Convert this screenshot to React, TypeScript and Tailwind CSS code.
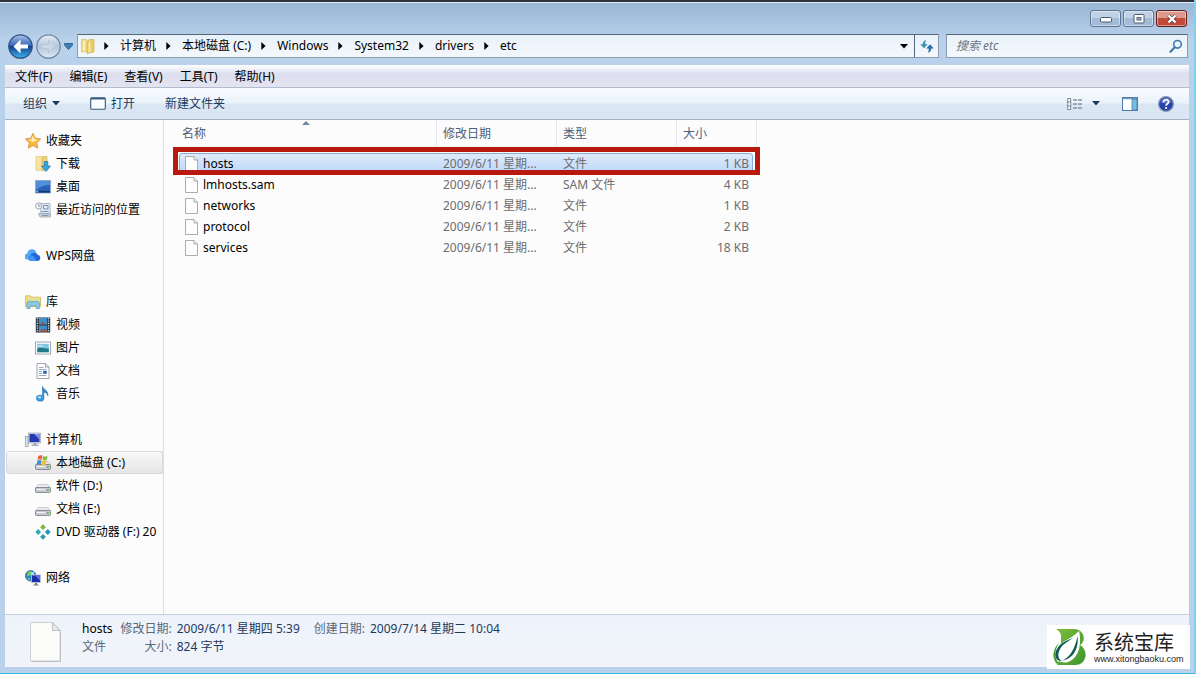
import type { ReactNode } from 'react'
import { clsx } from 'clsx'

interface FileRow {
  name: string
  date: string
  type: string
  size: string
}

interface NavItem {
  label: string
  icon: ReactNode
  active?: boolean
}

interface NavGroup extends NavItem {
  items: NavItem[]
}

const path = ['计算机', '本地磁盘 (C:)', 'Windows', 'System32', 'drivers', 'etc']

const menus = ['文件(F)', '编辑(E)', '查看(V)', '工具(T)', '帮助(H)']

const files: FileRow[] = [
  { name: 'hosts', date: '2009/6/11 星期...', type: '文件', size: '1 KB' },
  { name: 'lmhosts.sam', date: '2009/6/11 星期...', type: 'SAM 文件', size: '4 KB' },
  { name: 'networks', date: '2009/6/11 星期...', type: '文件', size: '1 KB' },
  { name: 'protocol', date: '2009/6/11 星期...', type: '文件', size: '2 KB' },
  { name: 'services', date: '2009/6/11 星期...', type: '文件', size: '18 KB' },
]

/* ---------- icons ---------- */

function Icon({ children }: { children: ReactNode }) {
  return (
    <svg viewBox="0 0 16 16" className="h-4 w-4 shrink-0" aria-hidden="true">
      {children}
    </svg>
  )
}

const StarIcon = () => (
  <Icon>
    <path
      d="M8 .3l2.300 5 5.400.6-4 3.800 1.100 5.500L8 12.400 3.200 15.200l1.100-5.500L.3 5.900l5.400-.6z"
      fill="#fbb83c"
      stroke="#d98a34"
      strokeWidth=".8"
      strokeLinejoin="round"
    />
    <path d="M8 2.500l1.500 3.700 3.800.5-5.300 2.300-4.800-2.300 3.300-.5z" fill="#fff0b0" />
  </Icon>
)

const FolderIcon = () => (
  <Icon>
    <path d="M1.500 1.500h5l1 1v11l-6 .5z" fill="#f3dc85" stroke="#d9b95c" strokeWidth=".6" />
    <path d="M7 4l2-2.500h5v12.500L7 15.500z" fill="#e9cb62" stroke="#cfae4c" strokeWidth=".6" />
    <path d="M3 3h2v10H3z" fill="#fbf0bd" />
    <path d="M8.500 5l2-2v10.500l-2 1z" fill="#f8e9a4" />
  </Icon>
)

const DownloadIcon = () => (
  <Icon>
    <path d="M1 .5h7v13.500l-7 .5z" fill="#f6e4a0" stroke="#d9bd6a" strokeWidth=".6" />
    <path d="M7 3l1.500-2.500H12v13L7 15z" fill="#ecd07a" stroke="#cfae4c" strokeWidth=".6" />
    <path d="M9.300 5.500h3.500v4.500h2.700L11 15.500 6.600 10h2.700z" fill="#38a5dc" stroke="#1f6fae" strokeWidth=".7" />
  </Icon>
)

const DesktopIcon = () => (
  <Icon>
    <rect x=".5" y="1.500" width="15" height="12.500" fill="#2a62b8" stroke="#8fa6c4" strokeWidth=".8" />
    <path d="M1 2h14v4C9 5.500 5 8 1 11z" fill="#4f8fdb" />
    <path d="M1 11.800h14v1.700H1z" fill="#16386f" />
    <circle cx="2.300" cy="12.500" r="1" fill="#6fd0f0" />
  </Icon>
)

const RecentIcon = () => (
  <Icon>
    <path d="M5 1.500h10v10H6z" fill="#e9eef4" stroke="#8f9cab" strokeWidth=".7" />
    <path d="M3.500 11.500h12V15H5z" fill="#cdd6e0" stroke="#8f9cab" strokeWidth=".7" />
    <path d="M8.500 3.500h4.500v3.500H8.500zM6.500 9.500h7M6.500 13.300h7" fill="none" stroke="#6a90b8" />
    <circle cx="3.700" cy="3.900" r="3.100" fill="#f4f6f8" stroke="#8995a3" strokeWidth=".8" />
    <path d="M3.700 2v2.200h1.700" fill="none" stroke="#66727f" strokeWidth=".7" />
  </Icon>
)

const CloudIcon = () => (
  <Icon>
    <path d="M3 11.500A3 3 0 0 1 2.300 5.500a4.700 4.700 0 0 1 9-1.500L6 12z" fill="#56a8f5" />
    <path d="M5 13a3.200 3.200 0 0 1 .3-5.600 4.200 4.200 0 0 1 7.500-.6A3.200 3.200 0 0 1 13 13z" fill="#2468dc" />
    <path d="M5 13a3.200 3.200 0 0 1 .3-5.600c2.700-.5 4.500 2 6.200 5.600z" fill="#4096f0" />
  </Icon>
)

const LibraryIcon = () => (
  <Icon>
    <path d="M.6 1.800h5l1 1.400h8.900v9.500H.6z" fill="#f1df84" stroke="#c9ad4f" strokeWidth=".7" />
    <path d="M2 5h12v3H2z" fill="#cfe3a3" />
    <path d="M2 14.500V9.500Q2 7.700 3.500 7.700h9.300q1.500 0 1.500 1.800v5h-3v-2.700H5v2.700z" fill="#8ccbe8" stroke="#4f94bc" strokeWidth=".7" />
  </Icon>
)

const VideoIcon = () => (
  <Icon>
    <rect x=".8" y=".5" width="14.400" height="15" fill="#27323e" />
    <rect x="4" y="1" width="8" height="6.500" fill="#3f8fcd" />
    <rect x="4" y="8.500" width="8" height="6.500" fill="#3f8fcd" />
    <path d="M6 7.500l1-3 2 1 1 2zM5 15l2-3 2 1 1.500-2 1.500 4z" fill="#a14f3e" />
    <path d="M2.500 1v14M13.500 1v14" stroke="#dfe6ec" strokeWidth="1.400" strokeDasharray="1.200 1.200" />
  </Icon>
)

const PictureIcon = () => (
  <Icon>
    <rect x=".5" y="2" width="15" height="12" fill="#fff" stroke="#8794a3" strokeWidth=".8" />
    <rect x="2.200" y="3.800" width="11.600" height="8.400" fill="#7fc4e2" />
    <path d="M2.200 9c3-2.500 5 0 11.600-.5v3.700H2.200z" fill="#1f7c85" />
    <path d="M3 6h5" stroke="#eaf6fb" />
  </Icon>
)

const DocumentIcon = () => (
  <Icon>
    <path d="M2 .5h8.500L14 4v11.500H2z" fill="#fdfdfd" stroke="#8b8f96" strokeWidth=".8" />
    <path d="M10.500.5V4H14" fill="#dfe3e8" stroke="#8b8f96" strokeWidth=".8" />
    <path d="M4 4.500h4.500M4 6.500h7.500M4 8.500h3M4 10.500h3M4 12.500h7.500" stroke="#7f9cc0" strokeWidth=".8" />
    <rect x="8.200" y="7.800" width="3.500" height="3" fill="#2f62a8" />
  </Icon>
)

const MusicIcon = () => (
  <Icon>
    <path d="M7.500.3c.5 3.200 6.300 4 5.300 9.700-.4-2.500-2-3.500-4-3.800V12H7.500z" fill="#2f86cc" stroke="#1f68ab" strokeWidth=".5" />
    <ellipse cx="5.200" cy="12.200" rx="3.900" ry="3.100" fill="#3c9cdf" stroke="#2370b2" strokeWidth=".5" />
    <ellipse cx="4.500" cy="11.300" rx="1.800" ry="1.100" fill="#b9e1f7" />
  </Icon>
)

const ComputerIcon = () => (
  <Icon>
    <rect x=".5" y="4.500" width="2.600" height="10" fill="#dfe4ea" stroke="#8b95a1" strokeWidth=".7" />
    <rect x="3.500" y="1" width="12" height="10" fill="#d5dbe3" stroke="#8b95a1" strokeWidth=".6" />
    <rect x="4.500" y="2" width="10" height="8" fill="#2338b4" />
    <path d="M9 2h5.500v5.500z" fill="#7d93ea" />
    <path d="M8.500 11h3v1.500h2V14h-7v-1.500h2z" fill="#a4adb8" />
  </Icon>
)

const Drive = () => (
  <>
    <path d="M3 6.500h10l2.500 3.500H.5z" fill="#e9ebee" stroke="#a6abb2" strokeWidth=".5" />
    <rect x=".5" y="9.500" width="15" height="5" rx="1" fill="#c6cad0" stroke="#73787f" strokeWidth=".8" />
    <path d="M2 11.500h8" stroke="#f4f5f6" />
    <rect x="12" y="11" width="1.700" height="2" fill="#58b947" />
  </>
)

const DriveIcon = () => (
  <Icon>
    <Drive />
  </Icon>
)

const SystemDriveIcon = () => (
  <Icon>
    <Drive />
    <path d="M3.300 1Q5.500-.5 7.500.6l-.8 4.100q-2-1-4.200.3z" fill="#e8603c" />
    <path d="M8.200.9q2.200 1 4.400 0l-.8 4.100q-2.200 1-4.300 0z" fill="#86bd3d" />
    <path d="M2.300 5.700q2.200-1.300 4.200-.3L5.800 9.400q-2-1-4.200.3z" fill="#3f8fdc" />
    <path d="M7.200 5.700q2.200 1 4.300 0l-.8 4q-2.200 1-4.200 0z" fill="#f5c02f" />
  </Icon>
)

const DvdIcon = () => (
  <Icon>
    <path d="M8 .3l2.900 2.900L8 6.100 5.100 3.200z" fill="#7fb93a" />
    <path d="M3.200 5.100L6.100 8l-2.900 2.900L.3 8z" fill="#2aa7b8" />
    <path d="M12.800 5.100L15.700 8l-2.900 2.900L9.900 8z" fill="#2596c4" />
    <path d="M8 9.900l2.900 2.900L8 15.700l-2.900-2.900z" fill="#2a9ab0" />
  </Icon>
)

const NetworkIcon = () => (
  <Icon>
    <circle cx="5.700" cy="5.800" r="5.300" fill="#2c83bd" stroke="#1d5c92" strokeWidth=".6" />
    <path d="M3 2.200q3-2 4.200 0L5 5.500 1.800 6.500zM1.800 8l3.200 0v2.500z" fill="#7fd060" />
    <path d="M6 2.800l3-1v3H6z" fill="#bfe6f5" />
    <rect x="6.500" y="5" width="9" height="7.500" fill="#1c2fa8" stroke="#bdc6d2" strokeWidth=".9" />
    <path d="M10 5.500h5v5z" fill="#5b76e0" />
    <path d="M10 13h2v1.500h1.500v1h-5v-1H10z" fill="#6d7782" />
  </Icon>
)

const Caret = ({ className }: { className?: string }) => (
  <svg viewBox="0 0 8 5" className={clsx('h-[5px] w-2 shrink-0', className)} aria-hidden="true">
    <path d="M0 0h8L4 4.600z" fill="currentColor" />
  </svg>
)

const Chevron = () => (
  <svg viewBox="0 0 5 8" className="h-2 w-[5px] shrink-0 text-black" aria-hidden="true">
    <path d="M.3 0v8L4.600 4z" fill="currentColor" />
  </svg>
)

const BlankFile = () => (
  <svg viewBox="0 0 13 16" className="h-4 w-[13px]" aria-hidden="true">
    <path d="M.5.5h8.500L12.500 4v11.500H.5z" fill="#fdfdfd" stroke="#a3a3a3" strokeWidth=".9" />
    <path d="M9 .5V4h3.500" fill="#eee" stroke="#a3a3a3" strokeWidth=".9" />
  </svg>
)

const LargeFile = () => (
  <svg viewBox="0 0 32 41" className="h-[41px] w-8 shrink-0" aria-hidden="true">
    <path d="M1.500 2h22.500l7 8v30H1.500z" fill="#b9bcc2" />
    <path d="M.5.5h22L30 8.500v30.500H.5z" fill="#fbfbfa" stroke="#c6c6c6" strokeWidth=".8" />
    <path d="M22.500.5v8H30z" fill="#e9e9e9" stroke="#b3b3b3" strokeWidth=".8" />
  </svg>
)

const groups: NavGroup[] = [
  {
    label: '收藏夹',
    icon: <StarIcon />,
    items: [
      { label: '下载', icon: <DownloadIcon /> },
      { label: '桌面', icon: <DesktopIcon /> },
      { label: '最近访问的位置', icon: <RecentIcon /> },
    ],
  },
  { label: 'WPS网盘', icon: <CloudIcon />, items: [] },
  {
    label: '库',
    icon: <LibraryIcon />,
    items: [
      { label: '视频', icon: <VideoIcon /> },
      { label: '图片', icon: <PictureIcon /> },
      { label: '文档', icon: <DocumentIcon /> },
      { label: '音乐', icon: <MusicIcon /> },
    ],
  },
  {
    label: '计算机',
    icon: <ComputerIcon />,
    items: [
      { label: '本地磁盘 (C:)', icon: <SystemDriveIcon />, active: true },
      { label: '软件 (D:)', icon: <DriveIcon /> },
      { label: '文档 (E:)', icon: <DriveIcon /> },
      { label: 'DVD 驱动器 (F:) 20', icon: <DvdIcon /> },
    ],
  },
  { label: '网络', icon: <NetworkIcon />, items: [] },
]

/* ---------- window chrome ---------- */

function TitleBar() {
  const base = 'flex h-[17px] w-[31px] items-center justify-center rounded-[3px] border shadow-[inset_0_0_0_1px_rgba(255,255,255,0.45)]'
  const plain = 'border-[#5d7491] bg-linear-to-b from-[#c0d2e6] from-50% to-[#a3bbd6] to-50%'
  return (
    <div className="flex h-[34px] items-start justify-end gap-[2px] border-t-2 border-[#2c333d] pt-2 pr-[7px] shadow-[inset_0_1px_0_#e4edf6]">
      <button aria-label="最小化" className={clsx(base, plain)}>
        <svg viewBox="0 0 12 6" className="mt-[3px] h-[6px] w-3">
          <rect x=".5" y=".5" width="11" height="4.500" rx="1" fill="#fff" stroke="#4d5b6c" />
        </svg>
      </button>
      <button aria-label="最大化" className={clsx(base, plain)}>
        <svg viewBox="0 0 12 10" className="h-[10px] w-3">
          <rect x="1" y=".5" width="10" height="8.500" rx="1" fill="#fff" stroke="#4d5b6c" />
          <rect x="4" y="3.500" width="4" height="2.500" fill="#9db6d2" stroke="#4d5b6c" strokeWidth=".9" />
        </svg>
      </button>
      <button
        aria-label="关闭"
        className={clsx(base, 'border-[#5b1f1c] bg-linear-to-b from-[#dd9a8c] from-50% to-[#c24a38] to-50%')}
      >
        <svg viewBox="0 0 12 10" className="h-[10px] w-3">
          <path d="M2.500 1.500l7 7M9.500 1.500l-7 7" stroke="#5a3a3f" strokeWidth="3.800" />
          <path d="M2.500 1.500l7 7M9.500 1.500l-7 7" stroke="#fff" strokeWidth="2.400" />
        </svg>
      </button>
    </div>
  )
}

function NavButtons() {
  return (
    <div className="flex items-center gap-[3px]">
      <button aria-label="后退" className="h-[25px] w-[25px]">
        <svg viewBox="0 0 25 25" className="h-full w-full">
          <defs>
            <linearGradient id="back" x1="0" y1="0" x2="0" y2="1">
              <stop offset="0" stopColor="#a8c4ea" />
              <stop offset=".45" stopColor="#3a6ab8" />
              <stop offset=".5" stopColor="#15408f" />
              <stop offset="1" stopColor="#3cb4ee" />
            </linearGradient>
          </defs>
          <circle cx="12.500" cy="12.500" r="11.700" fill="url(#back)" stroke="#33507c" strokeWidth="1.200" />
          <path d="M12.500 5.500l-7 7 7 7v-5h7.500v-4h-7.500z" fill="#fff" />
        </svg>
      </button>
      <button aria-label="前进" className="h-[25px] w-[25px]">
        <svg viewBox="0 0 25 25" className="h-full w-full">
          <defs>
            <linearGradient id="forward" x1="0" y1="0" x2="0" y2="1">
              <stop offset="0" stopColor="#e6edf5" />
              <stop offset=".5" stopColor="#b4c6dc" />
              <stop offset="1" stopColor="#dfe9f4" />
            </linearGradient>
          </defs>
          <circle cx="12.500" cy="12.500" r="11.700" fill="url(#forward)" stroke="#71839b" strokeWidth="1.200" />
          <path d="M12.500 6l6.700 6.500-6.700 6.500v-4.500H5.300v-4h7.200z" fill="#c9d7e7" stroke="#b3c3d6" strokeWidth=".7" />
        </svg>
      </button>
      <button aria-label="最近的页面">
        <svg viewBox="0 0 9 7" className="h-[7px] w-[9px]">
          <path d="M.5.5h8v1.500l-4 4.500-4-4.500z" fill="#3d83bb" stroke="#24517e" strokeWidth=".8" />
        </svg>
      </button>
    </div>
  )
}

function AddressRow() {
  const field = 'flex h-6 items-center border border-[#8b9cb1] border-t-[#54677c] bg-linear-to-b from-[#e9f1f9] to-[#f4f8fc]'
  return (
    <div className="flex h-[31px] items-start gap-[7px] pr-[6px] pl-2">
      <div className="-mr-[3px]">
        <NavButtons />
      </div>
      <nav aria-label="地址" className={clsx(field, 'min-w-0 flex-1 pl-[2px]')}>
        <FolderIcon />
        <ol className="flex flex-1 items-center gap-[10px] pl-2">
          {path.map((p) => (
            <li key={p} className="flex items-center gap-[11px]">
              <Chevron />
              <a href="#" className="whitespace-nowrap text-black">
                {p}
              </a>
            </li>
          ))}
        </ol>
        <button aria-label="历史记录" className="flex h-full w-5 items-center justify-center text-black">
          <Caret />
        </button>
        <button aria-label="刷新" className="flex h-full w-6 items-center justify-center border-l border-[#54677c]">
          <svg viewBox="0 0 14 14" className="h-[14px] w-[14px]">
            <path d="M6 1C4 1.500 2.800 3 2.800 5.200H.3L4 9.200l3.700-4H5.300C5.200 3.500 5.400 2 6 1z" fill="#3f92ad" />
            <path d="M8 13.800c2-.5 3.200-2 3.200-4.300h2.500L10 5.200 6.300 9.500h2.400c.1 1.500-.1 3.300-.7 4.300z" fill="#2d6ca8" />
          </svg>
        </button>
      </nav>
      <label className={clsx(field, 'w-[242px] pr-1 pl-[9px]')}>
        <input
          type="search"
          aria-label="搜索 etc"
          placeholder="搜索 etc"
          className="min-w-0 flex-1 bg-transparent italic outline-none placeholder:text-[#6d7580]"
        />
        <svg viewBox="0 0 14 14" className="h-[14px] w-[14px]" aria-hidden="true">
          <circle cx="8.500" cy="5.300" r="3.800" fill="#eef6fc" stroke="#3f78ab" strokeWidth="1.600" />
          <path d="M5.800 8.200L1.500 12.700" stroke="#3f78ab" strokeWidth="2.200" strokeLinecap="round" />
        </svg>
      </label>
    </div>
  )
}

function MenuBar() {
  return (
    <div className="flex h-[23px] items-center gap-[17px] border-b border-[#b4bccb] bg-linear-to-b from-white via-[#dcdfee] via-40% to-[#e3e4f2] px-[10px] pt-px text-black">
      {menus.map((m) => (
        <button key={m}>{m}</button>
      ))}
    </div>
  )
}

function Toolbar() {
  return (
    <div className="flex h-8 items-center border-b border-[#a2b1c6] bg-linear-to-b from-[#f8fbfe] from-0% via-[#eaf3fb] via-48% to-[#dbe6f4] to-52% pr-[15px] pl-[18px] text-[#1e395b]">
      <button className="flex items-center gap-[5px]">
        组织
        <Caret />
      </button>
      <button className="ml-[30px] flex items-center gap-[5px]">
        <svg viewBox="0 0 16 13" className="h-[13px] w-4" aria-hidden="true">
          <rect x=".7" y=".7" width="14.600" height="11.600" rx="1" fill="#fbfdff" stroke="#35577f" strokeWidth="1.100" />
          <path d="M1 1.700h14" stroke="#35577f" strokeWidth="1.500" />
        </svg>
        打开
      </button>
      <button className="ml-[30px]">新建文件夹</button>
      <div className="ml-auto flex items-center">
        <button aria-label="更改视图">
          <svg viewBox="0 0 16 12" className="h-3 w-4">
            <path d="M.7.5h3v11h-3zM.7 4h3M.7 8h3" fill="#fff" stroke="#6a7888" strokeWidth=".9" />
            <path d="M6 2h9.500M6 6h9.500M6 10h9.500" stroke="#52647a" strokeWidth="1.100" strokeDasharray="4 1" />
          </svg>
        </button>
        <button aria-label="更多选项" className="ml-[9px]">
          <Caret />
        </button>
        <button aria-label="显示预览窗格" className="ml-[22px]">
          <svg viewBox="0 0 16 14" className="h-[14px] w-4">
            <rect x=".5" y=".5" width="15" height="13" fill="#fff" stroke="#4f7ba6" />
            <path d="M1 1.500h14" stroke="#6f98be" strokeWidth="1.400" />
            <rect x="10" y="2.500" width="5" height="10.500" fill="#72bfe0" stroke="#4f7ba6" strokeWidth=".7" />
          </svg>
        </button>
        <button aria-label="获取帮助" className="ml-5">
          <svg viewBox="0 0 16 16" className="h-4 w-4">
            <circle cx="8" cy="8" r="7.400" fill="#2745a8" stroke="#8f9bb5" strokeWidth="1.200" />
            <path d="M2.500 6.500a5.600 5.600 0 0 1 11 0q-5.500 2-11 0z" fill="#6f8bdc" opacity=".7" />
            <path d="M5.600 6.200c0-3.300 5-3.200 5-.3 0 1.900-2.500 1.900-2.500 3.900" fill="none" stroke="#fff" strokeWidth="1.700" />
            <circle cx="8.100" cy="12" r="1.100" fill="#fff" />
          </svg>
        </button>
      </div>
    </div>
  )
}

/* ---------- panes ---------- */

function NavLink({ item, nested }: { item: NavItem; nested?: boolean }) {
  return (
    <a
      href="#"
      className={clsx(
        'flex h-[23px] items-center gap-[5px] overflow-hidden whitespace-nowrap border text-black',
        nested ? 'pl-[28px]' : 'pl-[18px]',
        item.active
          ? 'rounded-l-[3px] border-[#d9d9d9] bg-linear-to-b from-[#f8f8f8] to-[#e5e5e5]'
          : 'border-transparent',
      )}
    >
      {item.icon}
      {item.label}
    </a>
  )
}

function Sidebar() {
  return (
    <nav
      aria-label="导航窗格"
      className="flex w-[159px] shrink-0 flex-col gap-[23px] border-r border-[#d6e1f0] pt-[9px] pb-6 pl-px"
    >
      {groups.map((g) => (
        <div key={g.label}>
          <NavLink item={g} />
          {g.items.map((item) => (
            <NavLink key={item.label} item={item} nested />
          ))}
        </div>
      ))}
    </nav>
  )
}

function FileList() {
  const th = 'relative border-r border-[#e3e8ee] font-normal'
  return (
    <main className="min-w-0 flex-1 pl-[15px]">
      <table className="isolate w-[578px] table-fixed border-separate border-spacing-0 text-left text-[#6d6d6d]">
        <colgroup>
          <col className="w-[258px]" />
          <col className="w-[120px]" />
          <col className="w-[120px]" />
          <col className="w-20" />
        </colgroup>
        <thead className="text-[#4c607a]">
          <tr className="h-7">
            <th className={clsx(th, 'pl-[3px]')}>
              名称
              <svg viewBox="0 0 8 4" className="absolute top-px left-[123px] h-1 w-2" aria-label="升序">
                <path d="M0 4l4-4 4 4z" fill="#6c8aa8" />
              </svg>
            </th>
            <th className={clsx(th, 'pl-[6px]')}>修改日期</th>
            <th className={clsx(th, 'pl-[6px]')}>类型</th>
            <th className={clsx(th, 'pl-[6px]')}>大小</th>
          </tr>
          <tr aria-hidden="true" className="h-[5px]" />
        </thead>
        <tbody>
          {files.map((f, i) => (
            <tr key={f.name} className="relative h-[21px]">
              <td className="pl-[6px]">
                {i === 0 && (
                  <>
                    <span className="absolute inset-y-0 right-1 left-0 -z-10 rounded-[3px] border border-[#84acdd] bg-linear-to-b from-[#dfebfb] to-[#bcd7fa]" />
                    <span className="absolute -top-[6px] -right-[3px] -bottom-px -left-[6px] z-10 border-[5px] border-[#b8190c]" />
                  </>
                )}
                <span className="flex items-center gap-[5px] text-black">
                  <BlankFile />
                  {f.name}
                </span>
              </td>
              <td className="pl-[6px] whitespace-nowrap">{f.date}</td>
              <td className="pl-[6px]">{f.type}</td>
              <td className="pr-2 text-right">{f.size}</td>
            </tr>
          ))}
        </tbody>
      </table>
    </main>
  )
}

function DetailsPane() {
  const label = 'text-[#5a6779]'
  return (
    <footer className="flex h-[53px] items-start border-t border-[#c5d0df] bg-linear-to-b from-[#eef3fb] to-[#f1f4fa] pt-[5px] pl-[25px] text-[#1e395b]">
      <div className="pt-[2px]">
        <LargeFile />
      </div>
      <div className="ml-5 grid grid-cols-[auto_auto_auto_auto_auto] items-center gap-x-[5px] leading-[18px] whitespace-nowrap">
        <span className="text-black">hosts</span>
        <span className={clsx(label, 'pl-[3px] text-right')}>修改日期:</span>
        <span>2009/6/11 星期四 5:39</span>
        <span className={clsx(label, 'pl-[9px]')}>创建日期:</span>
        <span>2009/7/14 星期二 10:04</span>
        <span className={label}>文件</span>
        <span className={clsx(label, 'pl-[3px] text-right')}>大小:</span>
        <span>824 字节</span>
      </div>
    </footer>
  )
}

function SiteBadge() {
  return (
    <div className="absolute right-1 bottom-1 flex h-11 w-[143px] items-center gap-[7px] bg-white pl-[6px] text-[#222]">
      <svg viewBox="0 0 34 38" className="h-[38px] w-[34px] shrink-0" aria-hidden="true">
        <defs>
          <linearGradient id="leaf" x1="0" y1="0" x2="1" y2="1">
            <stop offset="0" stopColor="#7dbb3a" />
            <stop offset="1" stopColor="#3f962f" />
          </linearGradient>
        </defs>
        <path d="M3 1h18c10 0 13 12 6 16 9 5 7 20-5 20H4l4-8V8q0-4-5-7z" fill="url(#leaf)" />
        <path d="M26 3c3 13 0 29-13 31.500C5 35 2 30 3 24 5 13 18 12 26 3z" fill="#fff" />
        <path d="M24.500 8C26 19 21 31 9.500 32.500 17 29 22 21 24.500 8z" fill="#0f5c53" />
        <path d="M9 33C3 30 5 22 10 17c3-3 8-5 11-8-4 3-11 4-15 9C0 25 1 33 9 33z" fill="#0f5c53" />
        <path d="M4 36C-2 30 0 20 6 15 1 23 1 30 6 35z" fill="#4ca02f" />
      </svg>
      <div className="flex flex-col">
        <span className="font-['Noto_Sans_CJK_SC',sans-serif] text-[20px] leading-6">系统宝库</span>
        <span className="font-['Liberation_Sans',sans-serif] text-[9px] leading-[10px]">www.xitongbaoku.com</span>
      </div>
    </div>
  )
}

export default function App() {
  return (
    <div className="relative flex min-h-screen flex-col border-r-2 border-b border-r-[#7fd0ee] border-b-[#35b8dc] bg-[#b9d1ea] bg-linear-to-b from-[#98b3d3] to-[#b9d1ea] to-[40px] font-['Noto_Sans','Noto_Sans_CJK_SC',sans-serif] text-[12px] leading-4">
      <TitleBar />
      <AddressRow />
      <div className="mr-[5px] mb-[6px] ml-[5px] flex flex-1 flex-col bg-[#fcfcfc]">
        <MenuBar />
        <Toolbar />
        <div className="flex flex-1">
          <Sidebar />
          <FileList />
        </div>
        <DetailsPane />
      </div>
      <SiteBadge />
    </div>
  )
}
